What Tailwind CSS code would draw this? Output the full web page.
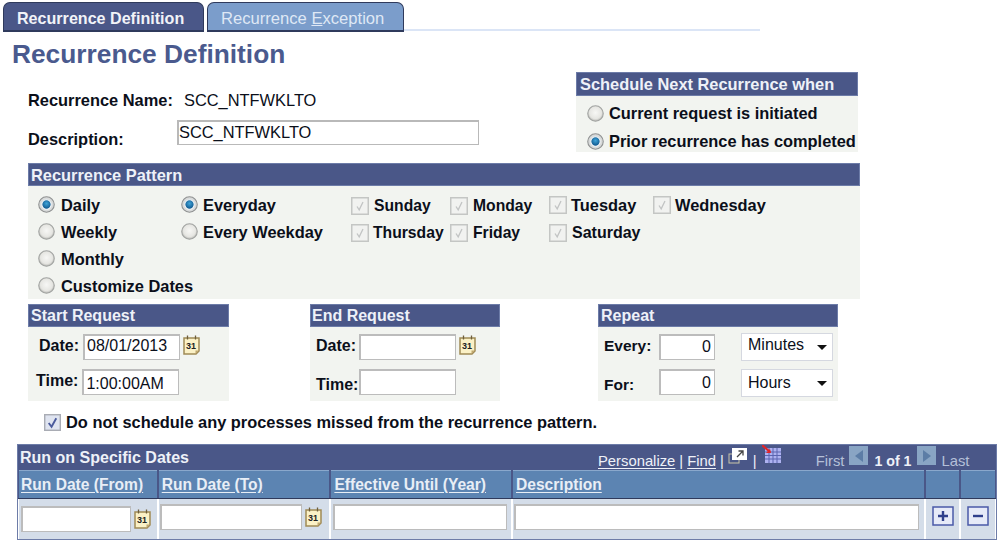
<!DOCTYPE html>
<html lang="en">
<head>
    <meta charset="UTF-8">
    <title>Recurrence Definition</title>
    <script src="https://cdn.jsdelivr.net/npm/@tailwindcss/browser@4"></script>
</head>
<body class="bg-white font-['Liberation_Sans',Arial,sans-serif] text-[16px] leading-[20px] text-[#0b0f1a] w-[1000px] h-[544px] overflow-hidden">

    <!-- shared icons -->
    <svg class="absolute w-0 h-0">
        <defs>
            <radialGradient id="radioOff" cx="50%" cy="45%" r="55%">
                <stop offset="0" stop-color="#f7f7f5"/><stop offset="0.7" stop-color="#e6e6e2"/><stop offset="1" stop-color="#b4b4b0"/>
            </radialGradient>
            <radialGradient id="radioDot" cx="50%" cy="40%" r="60%">
                <stop offset="0" stop-color="#3fa4d8"/><stop offset="1" stop-color="#0a4f86"/>
            </radialGradient>
        </defs>
        <symbol id="radio-off" viewBox="0 0 16 16">
            <circle cx="8" cy="8" r="7.3" fill="url(#radioOff)" stroke="#a3a5a3"/>
        </symbol>
        <symbol id="radio-on" viewBox="0 0 16 16">
            <circle cx="8" cy="8" r="7.3" fill="#d8dada" stroke="#8f9191"/>
            <circle cx="8" cy="8" r="4.4" fill="url(#radioDot)" stroke="#f4f8fa" stroke-width="1"/>
        </symbol>
        <symbol id="check-off" viewBox="0 0 18 18">
            <rect x="0.75" y="0.75" width="16.5" height="16.5" fill="#f1f2f0" stroke="#c4c6c4" stroke-width="1.5"/>
            <path d="M6 9.5l2.2 3.4L12 5" fill="none" stroke="#c2c4c4" stroke-width="1.3"/>
        </symbol>
        <symbol id="calendar-page" viewBox="0 0 17 20">
            <path d="M1 3h15v13l-3 3H1z" fill="#fbf1c6" stroke="#a08a55" stroke-width="1.5"/>
            <path d="M4.5 0.500v4M12.500 0.500v4" stroke="#6f5f3c" stroke-width="1.3"/>
            <path d="M12.500 19v-3.500h3.500z" fill="#bfa76f"/>
        </symbol>
    </svg>

    <!-- tabs -->
    <div class="flex items-end h-[32px] pl-[3px]">
        <div class="w-[201px] h-[30px] pl-[13px] pt-[5px] rounded-t-[7px] bg-[#4a5788] border border-b-2 border-[#2f3a5c] text-[#f1f3f8] font-bold text-[16.100px]">Recurrence Definition</div>
        <div class="ml-[3px] w-[197px] h-[30px] pl-[13px] pt-[6px] rounded-t-[7px] bg-[#7b9dcb] border border-b-2 border-[#2f3a5c] text-[#dfe8f5] text-[16.600px] whitespace-nowrap">Recurrence <span class="underline">E</span>xception</div>
        <div class="w-[356px] h-[2px] mb-[1px] bg-[#dbe5f6]"></div>
    </div>

    <!-- title -->
    <h1 class="pl-[12px] mt-[6px] h-[32px] text-[26.300px] leading-[32px] font-bold text-[#4a5a8e]">Recurrence Definition</h1>

    <!-- name, description and schedule box -->
    <div class="flex h-[80px] mt-[2px] pl-[28px] text-[16.400px]">
        <div class="w-[548px]">
            <div class="flex pt-[18px]">
                <span class="w-[156px] font-bold">Recurrence Name:</span>
                <span>SCC_NTFWKLTO</span>
            </div>
            <div class="flex mt-[10px]">
                <span class="w-[149px] pt-[9px] font-bold">Description:</span>
                <input value="SCC_NTFWKLTO" class="w-[302px] h-[25px] pb-[2px] bg-white border border-t-2 border-l-2 border-[#b9b9b9] text-[#0b0f1a]">
            </div>
        </div>
        <div class="w-[282px] bg-[#f2f4f0]">
            <div class="h-[24px] pl-[3px] pt-[1px] bg-[#4a5788] border border-[#6d7ca8] text-[#eef1f8] font-bold whitespace-nowrap">Schedule Next Recurrence when</div>
            <div class="flex items-center h-[28px] pl-[11px] pt-[6px] font-bold whitespace-nowrap"><svg class="w-[17px] h-[17px] mr-[5px] shrink-0"><use href="#radio-off"/></svg>Current request is initiated</div>
            <div class="flex items-center h-[28px] pl-[11px] pt-[6px] font-bold whitespace-nowrap"><svg class="w-[17px] h-[17px] mr-[5px] shrink-0"><use href="#radio-on"/></svg>Prior recurrence has completed</div>
        </div>
    </div>

    <!-- recurrence pattern -->
    <div class="ml-[28px] mt-[11px] w-[832px] h-[136px] bg-[#f2f4f0] text-[16.400px]">
        <div class="h-[23px] pl-[2px] pt-[1px] bg-[#4a5788] border border-[#6d7ca8] text-[#eef1f8] font-bold">Recurrence Pattern</div>
        <div class="flex pl-[10px] pt-[5px] font-bold whitespace-nowrap">
            <div class="w-[143px] shrink-0">
                <div class="flex items-center h-[27px]"><svg class="w-[17px] h-[17px] mr-[6px] shrink-0"><use href="#radio-on"/></svg>Daily</div>
                <div class="flex items-center h-[27px]"><svg class="w-[17px] h-[17px] mr-[6px] shrink-0"><use href="#radio-off"/></svg>Weekly</div>
                <div class="flex items-center h-[27px]"><svg class="w-[17px] h-[17px] mr-[6px] shrink-0"><use href="#radio-off"/></svg>Monthly</div>
                <div class="flex items-center h-[27px]"><svg class="w-[17px] h-[17px] mr-[6px] shrink-0"><use href="#radio-off"/></svg>Customize Dates</div>
            </div>
            <div class="w-[170px]">
                <div class="flex items-center h-[27px]"><svg class="w-[17px] h-[17px] mr-[5px] shrink-0"><use href="#radio-on"/></svg>Everyday</div>
                <div class="flex items-center h-[27px]"><svg class="w-[17px] h-[17px] mr-[5px] shrink-0"><use href="#radio-off"/></svg>Every Weekday</div>
            </div>
            <div class="w-[99px] pt-[1px] text-[15.700px]">
                <div class="flex items-center h-[27px]"><svg class="w-[18px] h-[18px] mr-[5px] shrink-0"><use href="#check-off"/></svg>Sunday</div>
                <div class="flex items-center h-[27px]"><svg class="w-[18px] h-[18px] mr-[4px] shrink-0"><use href="#check-off"/></svg>Thursday</div>
            </div>
            <div class="w-[99px] pt-[1px] text-[15.700px]">
                <div class="flex items-center h-[27px]"><svg class="w-[18px] h-[18px] mr-[5px] shrink-0"><use href="#check-off"/></svg>Monday</div>
                <div class="flex items-center h-[27px]"><svg class="w-[18px] h-[18px] mr-[5px] shrink-0"><use href="#check-off"/></svg>Friday</div>
            </div>
            <div class="w-[104px]">
                <div class="flex items-center h-[27px]"><svg class="w-[18px] h-[18px] mr-[4px] shrink-0"><use href="#check-off"/></svg>Tuesday</div>
                <div class="flex items-center h-[27px] pt-[2px] text-[16px]"><svg class="w-[18px] h-[18px] mr-[5px] shrink-0"><use href="#check-off"/></svg>Saturday</div>
            </div>
            <div class="flex items-center h-[27px]"><svg class="w-[18px] h-[18px] mr-[4px] shrink-0"><use href="#check-off"/></svg>Wednesday</div>
        </div>
    </div>

    <!-- start, end, repeat -->
    <div class="flex pl-[28px] mt-[5px] h-[97px] font-bold">
        <div class="w-[201px] bg-[#f2f4f0]">
            <div class="h-[23px] pl-[2px] pt-[1px] bg-[#4a5788] border border-[#6d7ca8] text-[#eef1f8]">Start Request</div>
            <div class="flex items-center h-[36px] pt-[3px] pl-[11px]">
                <span class="mr-[4px] mb-[2px]">Date:</span>
                <input value="08/01/2013" class="w-[97px] h-[26px] pl-[2px] pb-[2px] bg-white border border-t-2 border-l-2 border-[#bcbcbc] font-normal">
                <svg class="w-[17px] h-[20px] ml-[3px] mb-[3px]" viewBox="0 0 17 20"><use href="#calendar-page"/><text x="8" y="14" font-size="9" font-weight="700" text-anchor="middle" fill="#222">31</text></svg>
            </div>
            <div class="flex items-center h-[38px] pl-[8px]">
                <span class="mr-[4px] mb-[3px]">Time:</span>
                <input value="1:00:00AM" class="w-[97px] h-[26px] pl-[2px] pt-[2px] bg-white border border-t-2 border-l-2 border-[#bcbcbc] font-normal">
            </div>
        </div>
        <div class="ml-[81px] w-[190px] bg-[#f2f4f0]">
            <div class="h-[23px] pl-[1px] pt-[1px] bg-[#4a5788] border border-[#6d7ca8] text-[#eef1f8]">End Request</div>
            <div class="flex items-center h-[36px] pt-[3px] pl-[6px]">
                <span class="w-[43px] mb-[2px]">Date:</span>
                <input class="w-[97px] h-[26px] bg-white border border-t-2 border-l-2 border-[#bcbcbc]">
                <svg class="w-[17px] h-[20px] ml-[3px] mb-[3px]" viewBox="0 0 17 20"><use href="#calendar-page"/><text x="8" y="14" font-size="9" font-weight="700" text-anchor="middle" fill="#222">31</text></svg>
            </div>
            <div class="flex items-center h-[38px] pl-[6px]">
                <span class="w-[43px] mt-[5px]">Time:</span>
                <input class="w-[97px] h-[26px] bg-white border border-t-2 border-l-2 border-[#bcbcbc]">
            </div>
        </div>
        <div class="ml-[98px] w-[240px] bg-[#f2f4f0]">
            <div class="h-[23px] pl-[2px] pt-[1px] bg-[#4a5788] border border-[#6d7ca8] text-[#eef1f8]">Repeat</div>
            <div class="flex items-center h-[36px] pt-[3px] pl-[6px]">
                <span class="w-[55px] mb-[2px] text-[15.500px]">Every:</span>
                <input value="0" class="w-[56px] h-[26px] pr-[3px] text-right bg-white border border-t-2 border-l-2 border-[#bcbcbc] font-normal">
                <div class="relative ml-[26px] w-[92px] h-[28px] pl-[6px] pt-[1px] bg-white border border-[#d5d8e0] font-normal">Minutes
                    <svg class="absolute right-[5px] top-[11px] w-[10px] h-[5px]" viewBox="0 0 10 5"><path d="M0 0h10L5 5z" fill="#111"/></svg>
                </div>
            </div>
            <div class="flex items-center h-[38px] pl-[6px]">
                <span class="w-[55px] mt-[5px] text-[15.500px]">For:</span>
                <input value="0" class="w-[56px] h-[26px] pr-[3px] text-right bg-white border border-t-2 border-l-2 border-[#bcbcbc] font-normal">
                <div class="relative ml-[26px] mt-[1px] w-[92px] h-[28px] pl-[6px] pt-[3px] bg-white border border-[#d5d8e0] font-normal">Hours
                    <svg class="absolute right-[5px] top-[11px] w-[10px] h-[5px]" viewBox="0 0 10 5"><path d="M0 0h10L5 5z" fill="#111"/></svg>
                </div>
            </div>
        </div>
    </div>

    <!-- missed processes -->
    <div class="flex items-center h-[20px] mt-[11px] pl-[44px] font-bold text-[16.400px]">
        <svg class="w-[17px] h-[17px] mr-[5px]" viewBox="0 0 18 18">
            <rect x="0.75" y="0.75" width="16.5" height="16.5" fill="#dfe4f0" stroke="#a9acb4" stroke-width="1.5"/>
            <path d="M5 9.5l3 4L13 4.5" fill="none" stroke="#4a5a9c" stroke-width="2"/>
        </svg>
        Do not schedule any processes missed from the recurrence pattern.
    </div>

    <!-- run on specific dates grid -->
    <div class="ml-[17px] mt-[12px] w-[980px] h-[96px] border border-[#6d7ca8] bg-white">
        <div class="flex h-[25px] pl-[2px] bg-[#4a5788] text-[#eef1f8]">
            <span class="font-bold pt-[3px] w-[578px]">Run on Specific Dates</span>
            <div class="flex items-end h-[25px] text-[14.800px] leading-[18px] whitespace-nowrap">
                <span class="underline underline-offset-2">Personalize</span>
                <span class="mx-[4px]">|</span>
                <span class="underline underline-offset-2">Find</span>
                <span class="mx-[4px]">|</span>
                <svg class="w-[20px] h-[19px] self-start mt-[1px]" viewBox="0 0 20 19">
                    <rect x="1" y="8" width="10" height="9" fill="none" stroke="#c9c6a8"/>
                    <rect x="4" y="2" width="15" height="12" fill="#fff"/>
                    <path d="M9 11l6-6M10.500 5H15v4.500" fill="none" stroke="#444" stroke-width="1.300"/>
                </svg>
                <span class="ml-[5px] mr-[5px]">|</span>
                <svg class="w-[19px] h-[19px] self-start" viewBox="0 0 19 19">
                    <rect x="3" y="3" width="16" height="15" fill="#aeb2f0"/>
                    <path d="M3 7h16M3 10.500h16M3 14h16M7 3v15M11 3v15M15 3v15" stroke="#5c65b0" stroke-width="1"/>
                    <path d="M0 0l8 7" stroke="#e0262a" stroke-width="2.200"/>
                    <path d="M9 8H4l4-4z" fill="#e0262a"/>
                </svg>
                <span class="ml-[35px] text-[#b5c0d8]">First</span>
                <div class="flex items-center justify-center self-start mt-[1px] ml-[5px] w-[19px] h-[19px] bg-[#89a5c4]"><svg class="w-[8px] h-[12px]" viewBox="0 0 8 12"><path d="M8 0v12L0 6z" fill="#5c7da6"/></svg></div>
                <span class="ml-[6px] font-bold text-[14.200px]">1 of 1</span>
                <div class="flex items-center justify-center self-start mt-[1px] ml-[6px] w-[19px] h-[19px] bg-[#89a5c4]"><svg class="w-[8px] h-[12px]" viewBox="0 0 8 12"><path d="M0 0v12l8-6z" fill="#5c7da6"/></svg></div>
                <span class="ml-[5px] text-[#b5c0d8]">Last</span>
            </div>
        </div>
        <div class="flex h-[28px] gap-[2px] pl-[1px] pr-[1px] bg-[#4a5788] font-bold text-[#e8eef6] text-[15.600px] whitespace-nowrap">
            <div class="w-[138px] pl-[2px] pt-[4px] bg-[#5c84b2] border-t border-[#8aa8cc]"><span class="underline underline-offset-2">Run Date (From)</span></div>
            <div class="w-[171px] pl-[3px] pt-[4px] bg-[#5c84b2] border-t border-[#8aa8cc]"><span class="underline underline-offset-2">Run Date (To)</span></div>
            <div class="w-[180px] pl-[3px] pt-[4px] bg-[#5c84b2] border-t border-[#8aa8cc]"><span class="underline underline-offset-2">Effective Until (Year)</span></div>
            <div class="w-[412px] pl-[3px] pt-[4px] bg-[#5c84b2] border-t border-[#8aa8cc]"><span class="underline underline-offset-2">Description</span></div>
            <div class="w-[33px] bg-[#5c84b2] border-t border-[#8aa8cc]"></div>
            <div class="w-[34px] bg-[#5c84b2] border-t border-[#8aa8cc]"></div>
        </div>
        <div class="flex h-[41px] gap-[2px] pl-[1px] pr-[1px] border-t border-[#2f3a5c]">
            <div class="flex items-center w-[138px] pb-[1px] pl-[2px] bg-[#d4dde9]">
                <input class="w-[110px] h-[26px] bg-white border border-t-2 border-l-2 border-[#bcbcbc]">
                <svg class="w-[17px] h-[20px] ml-[3px]" viewBox="0 0 17 20"><use href="#calendar-page"/><text x="8" y="14" font-size="9" font-weight="700" text-anchor="middle" fill="#222">31</text></svg>
            </div>
            <div class="flex items-center w-[171px] pb-[4px] pl-[1px] bg-[#d4dde9]">
                <input class="w-[142px] h-[26px] bg-white border border-t-2 border-l-2 border-[#bcbcbc]">
                <svg class="w-[17px] h-[20px] ml-[3px]" viewBox="0 0 17 20"><use href="#calendar-page"/><text x="8" y="14" font-size="9" font-weight="700" text-anchor="middle" fill="#222">31</text></svg>
            </div>
            <div class="flex items-center w-[180px] pb-[4px] pl-[2px] bg-[#d4dde9]">
                <input class="w-[174px] h-[26px] bg-white border border-t-2 border-l-2 border-[#bcbcbc]">
            </div>
            <div class="flex items-center w-[412px] pb-[4px] pl-[1px] bg-[#d4dde9]">
                <input class="w-[405px] h-[26px] bg-white border border-t-2 border-l-2 border-[#bcbcbc]">
            </div>
            <div class="flex items-center justify-center w-[33px] pb-[6px] bg-[#d4dde9]">
                <svg class="w-[22px] h-[20px]" viewBox="0 0 22 20"><rect x="1" y="1" width="20" height="18" fill="#e6eaf8" stroke="#4a5aa8" stroke-width="1.500"/><path d="M11 5v10M6 10h10" stroke="#2f3f8c" stroke-width="2.400"/></svg>
            </div>
            <div class="flex items-center justify-center w-[34px] pb-[6px] bg-[#d4dde9]">
                <svg class="w-[22px] h-[20px]" viewBox="0 0 22 20"><rect x="1" y="1" width="20" height="18" fill="#e6eaf8" stroke="#4a5aa8" stroke-width="1.500"/><path d="M6 10h10" stroke="#2f3f8c" stroke-width="2.400"/></svg>
            </div>
        </div>
    </div>
</body>
</html>
